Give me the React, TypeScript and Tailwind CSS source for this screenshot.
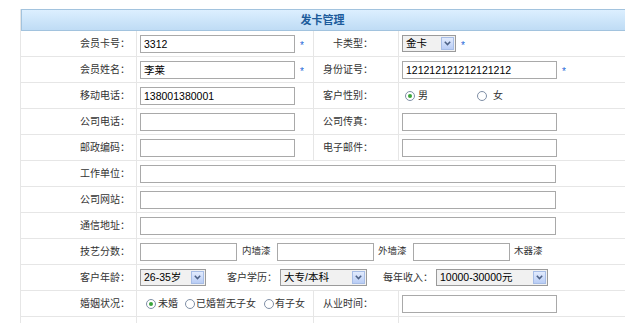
import React from "react";

const B = "border-[#e6e6e6]";

function Input({ w, value }: { w: number; value?: string }) {
  return (
    <div
      className="h-[18px] border border-[#a9a9a9] bg-white px-[3px] text-[10.5px] leading-[16px] text-black overflow-hidden whitespace-nowrap"
      style={{ width: w }}
    >
      {value}
    </div>
  );
}

function Star() {
  return <span className="ml-[5px] mt-[5px] text-[10px] leading-none text-[#2468d8]">*</span>;
}

function Select({ w, value }: { w: number; value: string }) {
  return (
    <div
      className="flex h-[17px] items-center border border-[#9a9a9a] bg-[#f1f1f1]"
      style={{ width: w }}
    >
      <div className="flex-1 pl-[3px] text-[10.5px] leading-[15px] text-black whitespace-nowrap overflow-hidden">
        {value}
      </div>
      <div className="m-[1px] flex h-[13px] w-[13px] items-center justify-center border border-[#a7bde6] bg-gradient-to-b from-[#e2ebfd] to-[#b9cdf5]">
        <svg width="7" height="5" viewBox="0 0 7 5">
          <path d="M0.8 0.8 L3.5 3.6 L6.2 0.8" fill="none" stroke="#4d6185" strokeWidth="1.5" />
        </svg>
      </div>
    </div>
  );
}

function Radio({ checked }: { checked?: boolean }) {
  return (
    <span className="inline-flex h-[10px] w-[10px] items-center justify-center rounded-full border border-[#7f8fa6] bg-white">
      {checked && <span className="h-[4px] w-[4px] rounded-full bg-[#3aa43a]" />}
    </span>
  );
}

function Label1({ children }: { children: React.ReactNode }) {
  return (
    <div className={`flex w-[116px] shrink-0 items-center justify-end border-r ${B} pr-[6px]`}>
      {children}
    </div>
  );
}

function Label3({ children }: { children: React.ReactNode }) {
  return (
    <div className={`flex w-[85px] shrink-0 items-center justify-end border-r ${B} pr-[25px]`}>
      {children}
    </div>
  );
}

function Row({ children }: { children: React.ReactNode }) {
  return <div className={`flex h-[26px] border-b ${B}`}>{children}</div>;
}

function Cell2({ children }: { children?: React.ReactNode }) {
  return (
    <div className={`flex w-[177px] shrink-0 items-center border-r ${B} pl-[3px]`}>{children}</div>
  );
}

function Cell4({ children }: { children?: React.ReactNode }) {
  return <div className="flex flex-1 items-center pl-[3px]">{children}</div>;
}

function Wide({ children }: { children?: React.ReactNode }) {
  return <div className="flex flex-1 items-center pl-[3px]">{children}</div>;
}

export default function App() {
  return (
    <div className="h-[323px] w-[625px] overflow-hidden bg-white font-['Liberation_Sans','Noto_Sans_CJK_SC',sans-serif] text-[10px] text-[#333]">
      <div className={`ml-[20px] mt-[9px] w-[620px] border-l ${B}`}>
        <div className="flex h-[22px] items-center justify-center border border-[#a2c3de] bg-gradient-to-b from-[#dcefff] to-[#bfdcf5] pr-[16px] text-[11px] font-bold text-[#1c5b9b]">
          发卡管理
        </div>
        <Row>
          <Label1>会员卡号：</Label1>
          <Cell2>
            <Input w={155} value="3312" />
            <Star />
          </Cell2>
          <Label3>卡类型：</Label3>
          <Cell4>
            <Select w={54} value="金卡" />
            <Star />
          </Cell4>
        </Row>
        <Row>
          <Label1>会员姓名：</Label1>
          <Cell2>
            <Input w={155} value="李莱" />
            <Star />
          </Cell2>
          <Label3>身份证号：</Label3>
          <Cell4>
            <Input w={155} value="121212121212121212" />
            <Star />
          </Cell4>
        </Row>
        <Row>
          <Label1>移动电话：</Label1>
          <Cell2>
            <Input w={155} value="138001380001" />
          </Cell2>
          <Label3>客户性别：</Label3>
          <Cell4>
            <div className="ml-[3px] flex items-center">
              <Radio checked />
              <span className="ml-[3px]">男</span>
              <span className="ml-[49px] flex items-center">
                <Radio />
              </span>
              <span className="ml-[6px]">女</span>
            </div>
          </Cell4>
        </Row>
        <Row>
          <Label1>公司电话：</Label1>
          <Cell2>
            <Input w={155} />
          </Cell2>
          <Label3>公司传真：</Label3>
          <Cell4>
            <Input w={155} />
          </Cell4>
        </Row>
        <Row>
          <Label1>邮政编码：</Label1>
          <Cell2>
            <Input w={155} />
          </Cell2>
          <Label3>电子邮件：</Label3>
          <Cell4>
            <Input w={155} />
          </Cell4>
        </Row>
        <Row>
          <Label1>工作单位：</Label1>
          <Wide>
            <Input w={416} />
          </Wide>
        </Row>
        <Row>
          <Label1>公司网站：</Label1>
          <Wide>
            <Input w={416} />
          </Wide>
        </Row>
        <Row>
          <Label1>通信地址：</Label1>
          <Wide>
            <Input w={416} />
          </Wide>
        </Row>
        <Row>
          <Label1>技艺分数：</Label1>
          <Wide>
            <Input w={97} />
            <span className="ml-[5px] w-[35px] whitespace-nowrap text-[9.5px]">内墙漆</span>
            <Input w={97} />
            <span className="ml-[4px] w-[35px] whitespace-nowrap text-[9.5px]">外墙漆</span>
            <Input w={97} />
            <span className="ml-[4px] whitespace-nowrap text-[9.5px]">木器漆</span>
          </Wide>
        </Row>
        <Row>
          <Label1>客户年龄：</Label1>
          <Wide>
            <Select w={66} value="26-35岁" />
            <span className="ml-[21px] mr-[3px]">客户学历：</span>
            <Select w={87} value="大专/本科" />
            <span className="ml-[16px] mr-[3px]">每年收入：</span>
            <Select w={112} value="10000-30000元" />
          </Wide>
        </Row>
        <Row>
          <Label1>婚姻状况：</Label1>
          <Cell2>
            <div className="ml-[6px] flex items-center whitespace-nowrap">
              <Radio checked />
              <span className="ml-[2px]">未婚</span>
              <span className="ml-[7px] flex items-center">
                <Radio />
              </span>
              <span className="ml-[1px]">已婚暂无子女</span>
              <span className="ml-[8px] flex items-center">
                <Radio />
              </span>
              <span className="ml-[1px]">有子女</span>
            </div>
          </Cell2>
          <Label3>从业时间：</Label3>
          <Cell4>
            <Input w={155} />
          </Cell4>
        </Row>
        <Row>
          <Label1>{""}</Label1>
          <Cell2 />
          <Label3>{""}</Label3>
          <Cell4 />
        </Row>
      </div>
    </div>
  );
}
